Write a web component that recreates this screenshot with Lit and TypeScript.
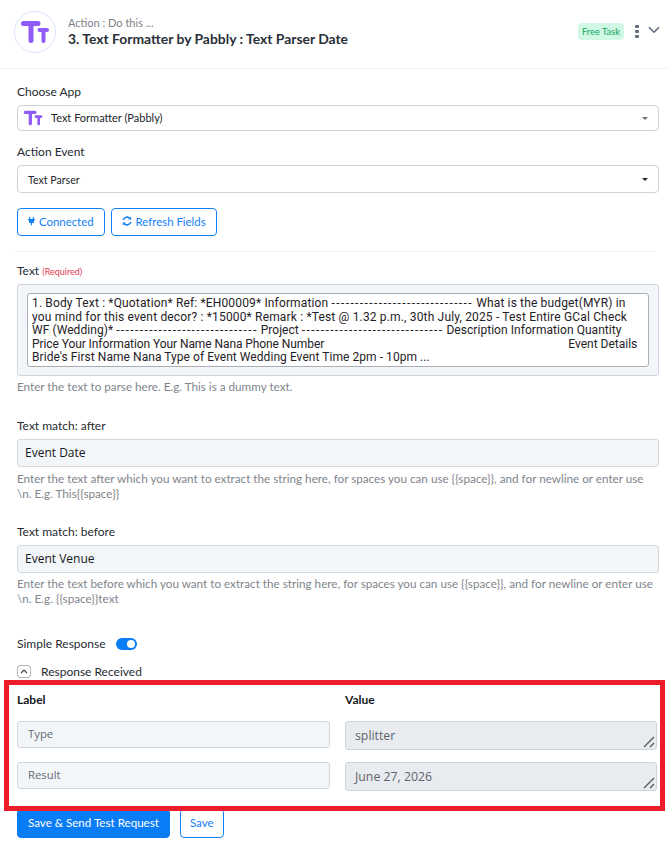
import { LitElement, html, css, svg } from "lit";
import { customElement } from "lit/decorators.js";

const logo = (w: number) => html`<svg width=${w} height=${w} viewBox="0 0 30 30" fill="none" stroke="#8f5cf7" stroke-linecap="round" stroke-linejoin="round">
  <path stroke-width="5" d="M3.500 6.500H18M11 6.500V23.500"/><path stroke-width="4" d="M19.500 13H27M23.500 13V24"/></svg>`;

const grip = svg`<path d="M1 11L11 1M7 11L11 7" stroke="#555" stroke-width="1.300" fill="none"/>`;
const dashes = html`<span class="dash">------------------------------</span>`;
const gap = " ".repeat(82);

@customElement("app-root")
export class AppRoot extends LitElement {
  static styles = css`
    :host { display: block; position: relative; width: 669px; height: 849px; overflow: hidden; background: #fff;
      font-family: Lato, "Open Sans", sans-serif; font-size: 12px; color: #24292f; }
    * { box-sizing: border-box; }
    .head { height: 69px; border-bottom: 1px solid #eef3fb; padding: 11px 9px 0 14px; display: flex; }
    .circle { width: 42px; height: 42px; border-radius: 50%; border: 1px solid #dfe3fb; display: flex; align-items: center; justify-content: center; margin-right: 12px; }
    .titles { padding-top: 5px; flex: 1; }
    .sub { font-size: 11px; line-height: 14px; color: #7d828a; }
    .title { font-size: 13.900px; font-weight: 700; line-height: 18px; color: #2a3038; }
    .tools { display: flex; align-items: flex-start; padding-top: 12px; }
    .badge { background: #d1f7e5; color: #12a663; font-size: 9.400px; height: 17px; line-height: 17px; padding: 0 4px; border-radius: 4px; margin-right: 11px; }
    .dots { display: flex; flex-direction: column; gap: 2px; margin-top: 2px; margin-right: 9px; }
    .dots i { width: 4px; height: 3px; border-radius: 1px; background: #636a7a; }
    .chev { margin-top: 3px; }
    .body { padding: 0 10px 0 17px; }
    label { display: block; font-size: 12px; line-height: 15px; color: #262b31; }
    .select { height: 26px; border: 1px solid #ced3db; border-radius: 4px; display: flex; align-items: center; font-size: 11px; color: #22262b; margin-top: 6px; position: relative; }
    .select.app { padding-left: 5px; gap: 8px; padding-bottom: 1px; }
    .select.ev { height: 28px; padding: 1px 0 0 10px; margin-top: 6px; font-size: 10.600px; }
    .caret { position: absolute; right: 10px; top: 50%; margin-top: -1px; border: 3.500px solid transparent; border-top-color: #6a7078; border-bottom: 0; }
    .ev .caret { border-top-color: #23272b; }
    .btns { display: flex; gap: 6px; margin-top: 15px; }
    .btn { height: 28px; border: 1px solid #1380f5; border-radius: 4px; color: #1380f5; font-size: 11.400px; display: flex; align-items: center; padding: 0 10px 2px; gap: 4px; background: #fff; }
    .rule { height: 1px; background: #f1f3f6; margin: 15px 3px 0 -3px; }
    .req { color: #e5394f; font-size: 9px; }
    .outer { margin-top: 5px; height: 92px; background: #f3f6f9; border: 1px solid #ced4de; border-radius: 3px; padding: 8px 9px; }
    .inner { height: 74px; background: #fff; border: 1px solid #a9aeb6; border-radius: 3px; padding: 3px 4px 0; font-family: Roboto, sans-serif; font-size: 12px; line-height: 13.600px; color: #1f2226; white-space: pre; overflow: hidden; }
    .l1 { letter-spacing: 0.150px; }
    .l2 { letter-spacing: 0.165px; }
    .l3 { letter-spacing: 0.050px; }
    .l4 { letter-spacing: -0.080px; }
    .l5 { letter-spacing: 0.055px; }
    .dash { letter-spacing: 1.400px; }
    .hint { font-size: 11.700px; line-height: 15px; color: #7f858c; }
    .input { height: 28px; background: #f3f6f9; border: 1px solid #d4d9e0; border-radius: 3px; display: flex; align-items: center; padding: 0 0 1px 7px; font-size: 12px; color: #15181b; font-family: "Open Sans", sans-serif; }
    .toggle-row { display: flex; align-items: center; gap: 10px; }
    .toggle { width: 21px; height: 12px; border-radius: 6px; background: #0a7cf5; position: relative; }
    .toggle::after { content: ""; position: absolute; right: 2px; top: 2px; width: 8px; height: 8px; border-radius: 50%; background: #fff; }
    .resp { display: flex; align-items: center; gap: 10px; margin-top: 13px; }
    .mini { width: 14px; height: 13px; border: 1px solid #aeb3ba; border-radius: 3px; display: flex; align-items: center; justify-content: center; }
    .grid { display: grid; grid-template-columns: 313px 312px; column-gap: 15px; row-gap: 14px; margin-top: 13px; }
    .head2 { font-weight: 700; font-size: 12px; line-height: 15px; color: #15181b; }
    .f { height: 27px; background: #f3f6f9; border: 1px solid #d2d7df; border-radius: 3px; display: flex; align-items: center; padding: 0 0 2px 10px; font-size: 11.300px; color: #666b73; font-family: "Open Sans", sans-serif; }
    .v { height: 29px; background: #e8ebef; border: 1px solid #cfd4dc; border-radius: 3px; padding: 5px 9px; font-size: 12.300px; color: #5f646c; font-family: "Open Sans", sans-serif; position: relative; margin-bottom: -2px; }
    .v svg { position: absolute; right: 1px; bottom: 1px; }
    .actions { display: flex; gap: 10px; margin-top: 20px; }
    .primary { background: #0a7cf5; border-color: #0a7cf5; color: #fff; font-size: 11.600px; height: 29px; }
    .plain { height: 29px; padding: 0 9px 2px; font-size: 11.500px; }
    .mark { position: absolute; left: 4px; top: 680px; width: 661px; height: 131px; border: 5px solid #ed1c2b; pointer-events: none; }
  `;

  render() {
    return html`
      <div class="head">
        <div class="circle">${logo(30)}</div>
        <div class="titles">
          <div class="sub">Action : Do this ...</div>
          <div class="title">3. Text Formatter by Pabbly : Text Parser Date</div>
        </div>
        <div class="tools">
          <span class="badge">Free Task</span>
          <span class="dots"><i></i><i></i><i></i></span>
          <svg class="chev" width="12" height="8" viewBox="0 0 12 8" fill="none" stroke="#606a7c" stroke-width="1.600"><path d="M1 1.200L6 6.200L11 1.200"/></svg>
        </div>
      </div>
      <div class="body">
        <label style="margin-top:15px">Choose App</label>
        <div class="select app">${logo(20)}<span>Text Formatter (Pabbly)</span><i class="caret"></i></div>
        <label style="margin-top:13px">Action Event</label>
        <div class="select ev"><span>Text Parser</span><i class="caret"></i></div>
        <div class="btns">
          <div class="btn">
            <svg width="7" height="10" viewBox="0 0 9 11" fill="#1380f5"><path d="M1.500 0h1.400v3h3.200V0h1.400v3H9v1.200H8v1.300C8 7.300 6.800 8.300 5.200 8.500V11H3.800V8.500C2.200 8.300 1 7.300 1 5.500V4.200H0V3h1.500z"/></svg>
            Connected
          </div>
          <div class="btn">
            <svg width="10" height="10" viewBox="0 0 12 12" fill="none" stroke="#1380f5" stroke-width="1.900"><path d="M1.500 5A4.600 4.600 0 0 1 9.500 3"/><path d="M10.500 7A4.600 4.600 0 0 1 2.500 9"/><path d="M11 .5V4.200H7.300z" fill="#1380f5" stroke="none"/><path d="M1 11.500V7.800H4.700z" fill="#1380f5" stroke="none"/></svg>
            Refresh Fields
          </div>
        </div>
        <div class="rule"></div>
        <label style="margin-top:11px">Text <span class="req">(Required)</span></label>
        <div class="outer"><div class="inner"><span class="l1">1. Body Text : *Quotation* Ref: *EH00009* Information ${dashes} What is the budget(MYR) in</span>
<span class="l2">you mind for this event decor? : *15000* Remark : *Test @ 1.32 p.m., 30th July, 2025 - Test Entire GCal Check</span>
<span class="l3">WF (Wedding)* ${dashes} Project ${dashes} Description Information Quantity</span>
<span class="l4">Price Your Information Your Name Nana Phone Number</span>${gap}Event Details
<span class="l5">Bride's First Name Nana Type of Event Wedding Event Time 2pm - 10pm ...</span></div></div>
        <div class="hint" style="margin-top:3px">Enter the text to parse here. E.g. This is a dummy text.</div>

        <label style="margin-top:24px">Text match: after</label>
        <div class="input" style="margin-top:6px">Event Date</div>
        <div class="hint" style="margin-top:4px">Enter the text after which you want to extract the string here, for spaces you can use {{space}}, and for newline or enter use<br>\\n. E.g. This{{space}}</div>

        <label style="margin-top:23px">Text match: before</label>
        <div class="input" style="margin-top:6px">Event Venue</div>
        <div class="hint" style="margin-top:3px">Enter the text before which you want to extract the string here, for spaces you can use {{space}}, and for newline or enter use<br>\\n. E.g. {{space}}text</div>

        <div class="toggle-row" style="margin-top:30px"><label>Simple Response</label><span class="toggle"></span></div>
        <div class="resp">
          <span class="mini"><svg width="8" height="5" viewBox="0 0 8 5" fill="none" stroke="#3c4248" stroke-width="1.200"><path d="M1 4L4 1L7 4"/></svg></span>
          <label>Response Received</label>
        </div>
        <div class="grid">
          <div class="head2">Label</div><div class="head2">Value</div>
          <div class="f">Type</div>
          <div class="v">splitter<svg width="12" height="12" viewBox="0 0 12 12">${grip}</svg></div>
          <div class="f">Result</div>
          <div class="v">June 27, 2026<svg width="12" height="12" viewBox="0 0 12 12">${grip}</svg></div>
        </div>
        <div class="actions">
          <div class="btn primary">Save &amp; Send Test Request</div>
          <div class="btn plain">Save</div>
        </div>
      </div>
      <div class="mark"></div>
    `;
  }
}
